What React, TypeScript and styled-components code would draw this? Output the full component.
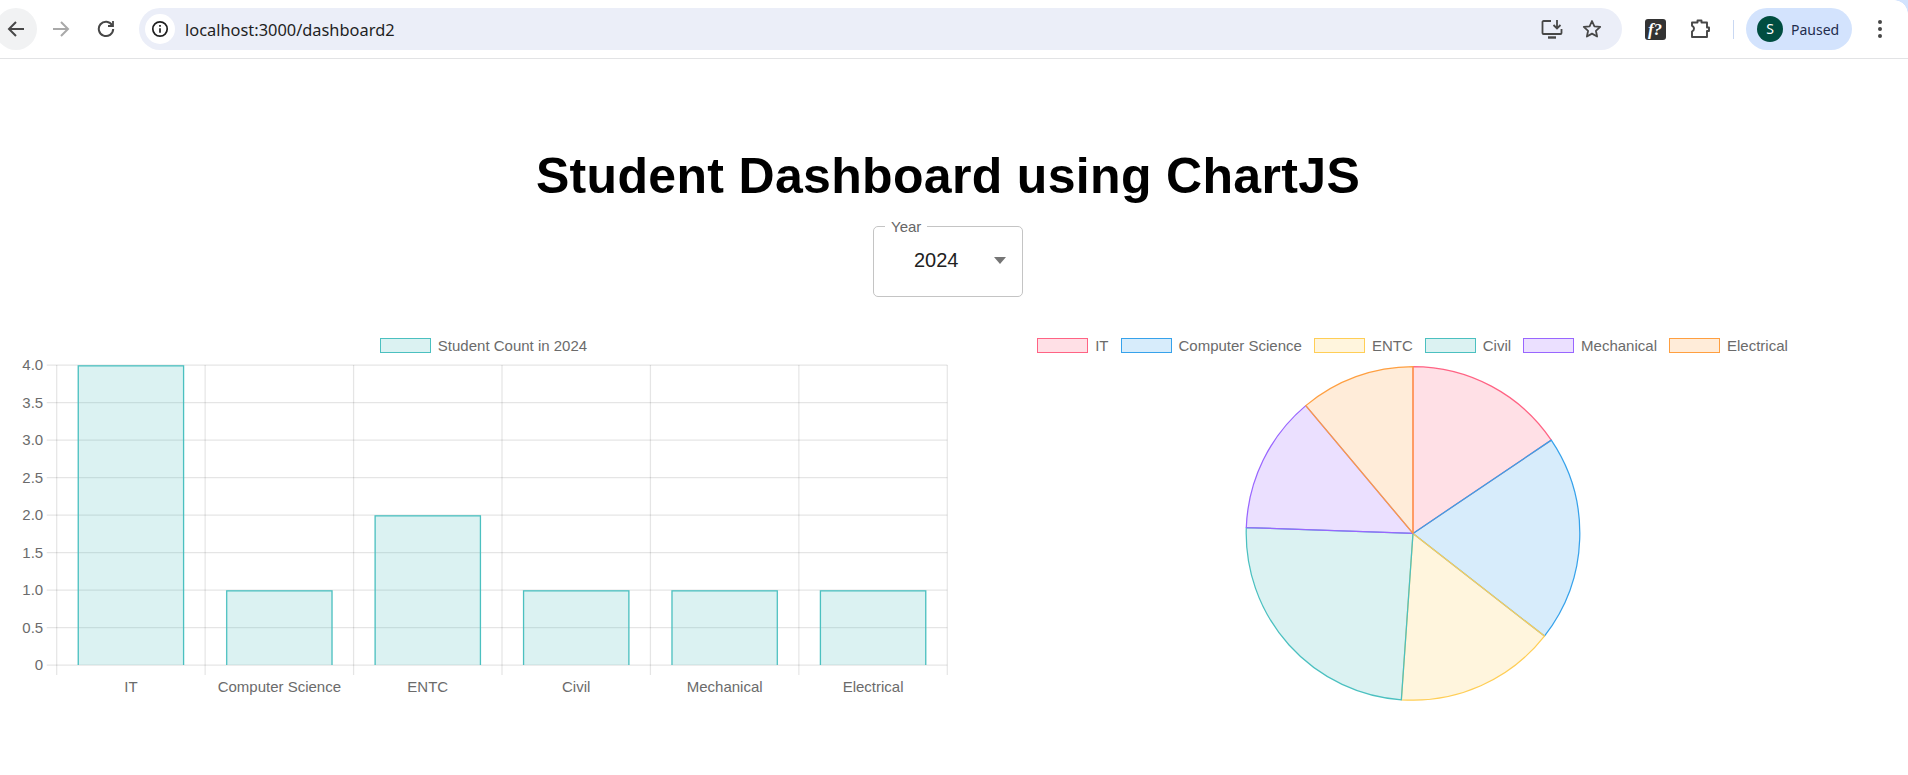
import React from 'react';
import styled, { createGlobalStyle } from 'styled-components';

const GlobalStyle = createGlobalStyle`
  html, body {
    margin: 0;
    padding: 0;
    background: #fff;
    overflow: hidden;
    font-family: "Liberation Sans", Arial, sans-serif;
  }
`;

const Toolbar = styled.header`
  position: relative;
  display: flex;
  align-items: center;
  height: 58px;
  border-bottom: 1px solid #e2e3e5;
  background: #fff;

  &::before {
    content: '';
    position: absolute;
    top: 0;
    right: 0;
    width: 14px;
    height: 14px;
    background: radial-gradient(circle at 0 100%, transparent 13.5px, #d3e3fd 14px);
  }
`;

const ToolButton = styled.div<{ $active?: boolean }>`
  flex: none;
  width: 42px;
  height: 42px;
  display: flex;
  align-items: center;
  justify-content: center;
  border-radius: 50%;
  background: ${(p) => (p.$active ? '#f1f2f3' : 'transparent')};
`;

const NavGroup = styled.div`
  display: flex;
  gap: 3px;
  margin-left: -5px;
  margin-right: 12px;
`;

const Omnibox = styled.div`
  flex: none;
  width: 1483px;
  height: 42px;
  display: flex;
  align-items: center;
  border-radius: 21px;
  background: #ebeef8;
  padding: 0 10px 0 6px;
  box-sizing: border-box;
`;

const InfoChip = styled.div`
  flex: none;
  width: 30px;
  height: 30px;
  border-radius: 50%;
  background: #fff;
  display: flex;
  align-items: center;
  justify-content: center;
  margin-right: 10px;
`;

const Url = styled.span`
  font-family: "Noto Sans", sans-serif;
  font-size: 16.4px;
  color: #1f1f1f;
  flex: 1;
`;

const OmniIcons = styled.div`
  display: flex;
`;

const SmallButton = styled.div`
  flex: none;
  width: 40px;
  height: 40px;
  display: flex;
  align-items: center;
  justify-content: center;
`;

const ExtGroup = styled.div`
  display: flex;
  gap: 5px;
  margin-left: 13px;
`;

const ExtBadge = styled.div`
  width: 21px;
  height: 21px;
  border-radius: 3px;
  background: #333;
  color: #fff;
  font-family: "Liberation Serif", serif;
  font-style: italic;
  font-weight: 700;
  font-size: 17px;
  line-height: 21px;
  text-align: center;
`;

const Divider = styled.div`
  flex: none;
  width: 1px;
  height: 19px;
  background: #c9d8f2;
  margin: 0 12px 0 13px;
`;

const ProfilePill = styled.div`
  flex: none;
  width: 106px;
  height: 42px;
  display: flex;
  align-items: center;
  border-radius: 21px;
  background: #d3e3fd;
  padding-left: 11px;
  box-sizing: border-box;
`;

const Avatar = styled.div`
  flex: none;
  width: 26px;
  height: 26px;
  border-radius: 50%;
  background: #004d40;
  color: #fff;
  font-family: "Noto Sans", sans-serif;
  font-size: 14px;
  line-height: 26px;
  text-align: center;
  margin-right: 8px;
`;

const ProfileText = styled.span`
  font-family: "Noto Sans", sans-serif;
  font-size: 14px;
  color: #1f2d4d;
`;

const MenuButton = styled(SmallButton)`
  margin-left: 8px;
`;

const Page = styled.main`
  display: flex;
  flex-direction: column;
  align-items: center;
  padding: 0 32px 0 20px;
`;

const Title = styled.h1`
  margin: 86px 0 0;
  height: 73px;
  font-size: 50px;
  line-height: 63px;
  font-weight: 700;
  letter-spacing: 0.33px;
  color: #000;
  text-align: center;
`;

const YearField = styled.fieldset`
  margin: 0;
  padding: 0;
  box-sizing: border-box;
  width: 150px;
  height: 79px;
  border: 1.25px solid #c4c4c4;
  border-radius: 5px;
`;

const YearLegend = styled.legend`
  margin: 0 auto 0 11px;
  padding: 0 6px;
  font-size: 15px;
  line-height: 17px;
  color: #666;
`;

const YearRow = styled.div`
  display: flex;
  align-items: center;
  justify-content: space-between;
  height: 50px;
  padding: 0 16px 0 40px;
`;

const YearValue = styled.span`
  font-size: 20px;
  color: #212121;
`;

const Caret = styled.span`
  width: 0;
  height: 0;
  border-left: 6.5px solid transparent;
  border-right: 6.5px solid transparent;
  border-top: 7px solid #757575;
`;

const Charts = styled.section`
  align-self: stretch;
  display: grid;
  grid-template-columns: 1fr 1fr;
  gap: 2px;
  margin-top: 39.5px;
`;

const ChartPanel = styled.div`
  display: flex;
  flex-direction: column;
  min-width: 0;
`;

const Legend = styled.ul`
  display: flex;
  justify-content: center;
  gap: 12px;
  margin: 0 0 2.8px;
  padding: 0;
  list-style: none;
  height: 17px;
`;

const LegendItem = styled.li`
  display: flex;
  align-items: center;
  gap: 7px;
  font-size: 15px;
  color: #6b6b6b;
`;

const Swatch = styled.span<{ $stroke: string; $fill: string }>`
  flex: none;
  width: 51px;
  height: 15px;
  box-sizing: border-box;
  border: 1.25px solid ${(p) => p.$stroke};
  background: ${(p) => p.$fill};
`;

const ChartSvg = styled.svg`
  display: block;
  width: 927.5px;
  height: 365px;

  text {
    font-family: "Liberation Sans", Arial, sans-serif;
    font-size: 15px;
    fill: #6b6b6b;
  }
`;

const GRID = 'rgba(0,0,0,0.1)';
const TEAL = 'rgb(75,192,192)';
const TEAL_FILL = 'rgba(75,192,192,0.2)';

const categories = ['IT', 'Computer Science', 'ENTC', 'Civil', 'Mechanical', 'Electrical'];
const counts = [4, 1, 2, 1, 1, 1];
const pieData = [7, 9, 7, 11, 6, 5];
const pieColors = [
  [255, 99, 132],
  [54, 162, 235],
  [255, 206, 86],
  [75, 192, 192],
  [153, 102, 255],
  [255, 159, 64],
];

// plot area, in the svg's own coordinates
const plot = { left: 36.7, right: 927.3, top: 9, bottom: 309 };
const stepX = (plot.right - plot.left) / 6;
const stepY = (plot.bottom - plot.top) / 8;

const BarChart = () => (
  <ChartSvg viewBox="0 0 927.5 365">
    {Array.from({ length: 9 }, (_, i) => {
      const y = plot.top + i * stepY;
      return (
        <g key={i}>
          <line x1={plot.left - 10} x2={plot.right} y1={y} y2={y} stroke={GRID} strokeWidth={1.25} />
          <text x={plot.left - 13.5} y={y + 5.3} textAnchor="end">
            {i === 8 ? '0' : (4 - i * 0.5).toFixed(1)}
          </text>
        </g>
      );
    })}
    {Array.from({ length: 7 }, (_, i) => {
      const x = plot.left + i * stepX;
      return <line key={i} x1={x} x2={x} y1={plot.top} y2={plot.bottom + 10} stroke={GRID} strokeWidth={1.25} />;
    })}
    {counts.map((c, i) => {
      const w = stepX * 0.72;
      const x = plot.left + stepX * i + (stepX - w) / 2;
      const top = plot.bottom - c * stepY * 2;
      const inset = 0.8;
      return (
        <g key={i}>
          <rect x={x} y={top} width={w} height={plot.bottom - top} fill={TEAL_FILL} />
          <path
            d={`M${x + inset} ${plot.bottom}V${top + inset}H${x + w - inset}V${plot.bottom}`}
            fill="none"
            stroke={TEAL}
            strokeWidth={1.25}
          />
        </g>
      );
    })}
    {categories.map((c, i) => (
      <text key={c} x={plot.left + stepX * (i + 0.5)} y={335.7} textAnchor="middle">
        {c}
      </text>
    ))}
  </ChartSvg>
);

const PieChart = () => {
  const cx = 464;
  const cy = 177.4;
  const r = 166.8;
  const total = pieData.reduce((a, b) => a + b, 0);
  let start = -Math.PI / 2;
  return (
    <ChartSvg viewBox="0 0 927.5 365">
      {pieData.map((v, i) => {
        const end = start + (v / total) * Math.PI * 2;
        const large = end - start > Math.PI ? 1 : 0;
        const d = `M${cx} ${cy}L${cx + r * Math.cos(start)} ${cy + r * Math.sin(start)}A${r} ${r} 0 ${large} 1 ${
          cx + r * Math.cos(end)
        } ${cy + r * Math.sin(end)}Z`;
        start = end;
        const [a, b, c] = pieColors[i];
        return (
          <path key={i} d={d} fill={`rgba(${a},${b},${c},0.2)`} stroke={`rgb(${a},${b},${c})`} strokeWidth={1.25} strokeLinejoin="round" />
        );
      })}
    </ChartSvg>
  );
};

const Icon = styled.svg`
  display: block;
  fill: none;
`;

const App: React.FC = () => (
  <>
    <GlobalStyle />
    <Toolbar>
      <NavGroup>
        <ToolButton $active>
          <Icon width="18" height="18" viewBox="0 0 18 18" stroke="#474747" strokeWidth="2">
            <path d="M17 9H2M9 2L2 9l7 7" />
          </Icon>
        </ToolButton>
        <ToolButton>
          <Icon width="18" height="18" viewBox="0 0 18 18" stroke="#a9a9a9" strokeWidth="2">
            <path d="M1 9h15M9 2l7 7-7 7" />
          </Icon>
        </ToolButton>
        <ToolButton>
          <Icon width="18" height="18" viewBox="0 0 18 18" stroke="#474747" strokeWidth="2">
            <path d="M15.2 5.2A7.2 7.2 0 1 0 16.2 9" />
            <path d="M16 1v5h-5" strokeWidth="1.8" />
          </Icon>
        </ToolButton>
      </NavGroup>
      <Omnibox>
        <InfoChip>
          <Icon width="18" height="18" viewBox="0 0 18 18" stroke="#1f1f1f" strokeWidth="1.7">
            <circle cx="9" cy="9" r="7.2" />
            <path d="M9 8.2v4.6M9 5v1.8" />
          </Icon>
        </InfoChip>
        <Url>localhost:3000/dashboard2</Url>
        <OmniIcons>
          <SmallButton>
            <Icon width="22" height="20" viewBox="0 0 22 20" stroke="#474747" strokeWidth="1.8">
              <path d="M10 2H2.500a1 1 0 0 0-1 1v11a1 1 0 0 0 1 1h17a1 1 0 0 0 1-1v-4" />
              <path d="M7 18.500h8" strokeWidth="2.400" />
              <path d="M16 1v8M12.500 6l3.500 3.500L19.500 6" />
            </Icon>
          </SmallButton>
          <SmallButton>
            <Icon width="20" height="20" viewBox="0 0 20 20" stroke="#474747" strokeWidth="1.8" strokeLinejoin="round">
              <path d="M10 2l2.400 5.300 5.800.6-4.300 3.900 1.200 5.700L10 14.600 4.900 17.500l1.200-5.700L1.800 7.900l5.800-.6z" />
            </Icon>
          </SmallButton>
        </OmniIcons>
      </Omnibox>
      <ExtGroup>
        <SmallButton>
          <ExtBadge>f?</ExtBadge>
        </SmallButton>
        <SmallButton>
          <Icon width="22" height="22" viewBox="0 0 22 22" stroke="#474747" strokeWidth="1.9" strokeLinejoin="round">
            <path d="M3 4.500h5.500V2.500h4v2h5.500V9.500h2v3.500h-2v6H3v-5.500c1.600-.8 2-1.700 2-2.700S4.600 8.300 3 7.800z" />
          </Icon>
        </SmallButton>
      </ExtGroup>
      <Divider />
      <ProfilePill>
        <Avatar>S</Avatar>
        <ProfileText>Paused</ProfileText>
      </ProfilePill>
      <MenuButton>
        <Icon width="6" height="20" viewBox="0 0 6 20">
          <circle cx="3" cy="3" r="2" fill="#474747" />
          <circle cx="3" cy="10" r="2" fill="#474747" />
          <circle cx="3" cy="17" r="2" fill="#474747" />
        </Icon>
      </MenuButton>
    </Toolbar>
    <Page>
      <Title>Student Dashboard using ChartJS</Title>
      <YearField>
        <YearLegend>Year</YearLegend>
        <YearRow>
          <YearValue>2024</YearValue>
          <Caret />
        </YearRow>
      </YearField>
      <Charts>
        <ChartPanel>
          <Legend>
            <LegendItem>
              <Swatch $stroke={TEAL} $fill={TEAL_FILL} />
              Student Count in 2024
            </LegendItem>
          </Legend>
          <BarChart />
        </ChartPanel>
        <ChartPanel>
          <Legend>
            {categories.map((c, i) => {
              const [r, g, b] = pieColors[i];
              return (
                <LegendItem key={c}>
                  <Swatch $stroke={`rgb(${r},${g},${b})`} $fill={`rgba(${r},${g},${b},0.2)`} />
                  {c}
                </LegendItem>
              );
            })}
          </Legend>
          <PieChart />
        </ChartPanel>
      </Charts>
    </Page>
  </>
);

export default App;
